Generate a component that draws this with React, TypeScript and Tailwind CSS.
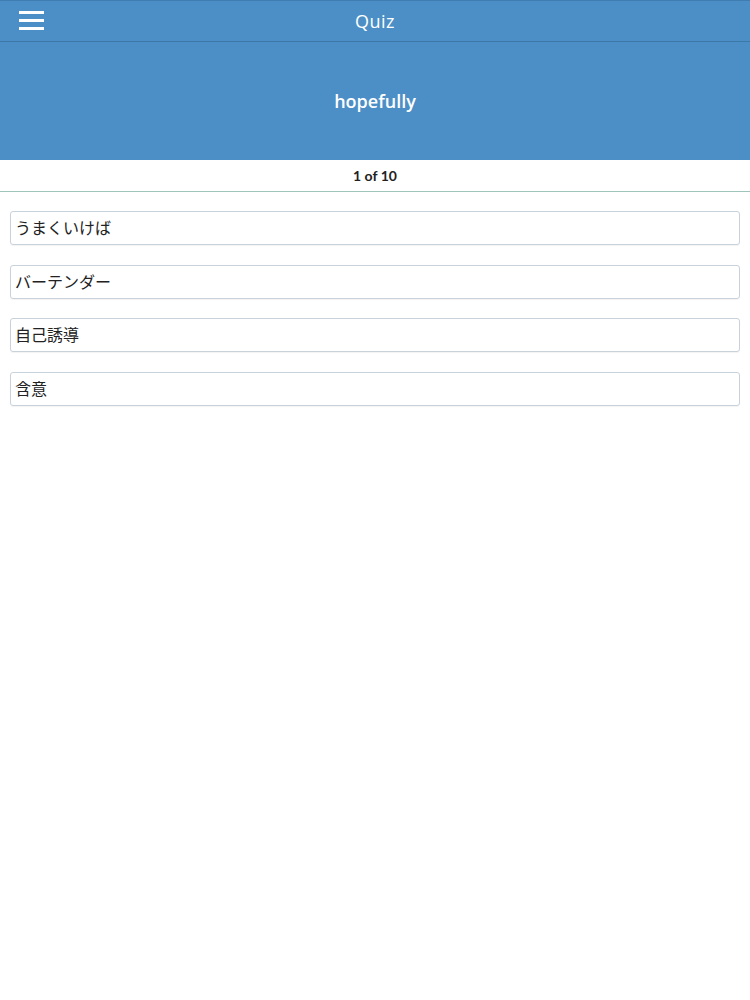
import React from "react";

const answers = ["うまくいけば", "バーテンダー", "自己誘導", "含意"];

const App: React.FC = () => {
  return (
    <div
      className="min-h-[1000px] bg-white"
      style={{ fontFamily: '"Open Sans", "Noto Sans CJK JP", sans-serif' }}
    >
      {/* top bar */}
      <header className="relative h-[42px] bg-[#4b8fc6] border-t border-[#3f7db0] border-b border-b-[#3c78a8] flex items-center justify-center">
        <button className="absolute left-[19px] top-[10px] flex flex-col gap-[5px]">
          <span className="block w-[25px] h-[3px] bg-white" />
          <span className="block w-[25px] h-[3px] bg-white" />
          <span className="block w-[25px] h-[3px] bg-white" />
        </button>
        <h1 className="text-white text-[18px] tracking-wide">Quiz</h1>
      </header>

      {/* word */}
      <section className="h-[118px] bg-[#4b8fc6] flex items-center justify-center">
        <h2 className="text-white text-[18px] font-semibold">hopefully</h2>
      </section>

      {/* progress */}
      <div className="h-[32px] border-b border-[#9fc4bb] flex items-center justify-center">
        <span
          className="text-[14px] font-bold text-[#222]"
          style={{ fontFamily: '"Lato", sans-serif' }}
        >
          1 of 10
        </span>
      </div>

      {/* answers */}
      <ul className="px-[10px] pt-[19px] flex flex-col gap-[19.5px]">
        {answers.map((a) => (
          <li
            key={a}
            className="h-[34px] border border-[#c9d2da] rounded-[3px] shadow-[0_1px_1px_rgba(0,0,0,0.05)] flex items-center px-[4px] text-[16px] text-[#222]"
          >
            {a}
          </li>
        ))}
      </ul>
    </div>
  );
};

export default App;
